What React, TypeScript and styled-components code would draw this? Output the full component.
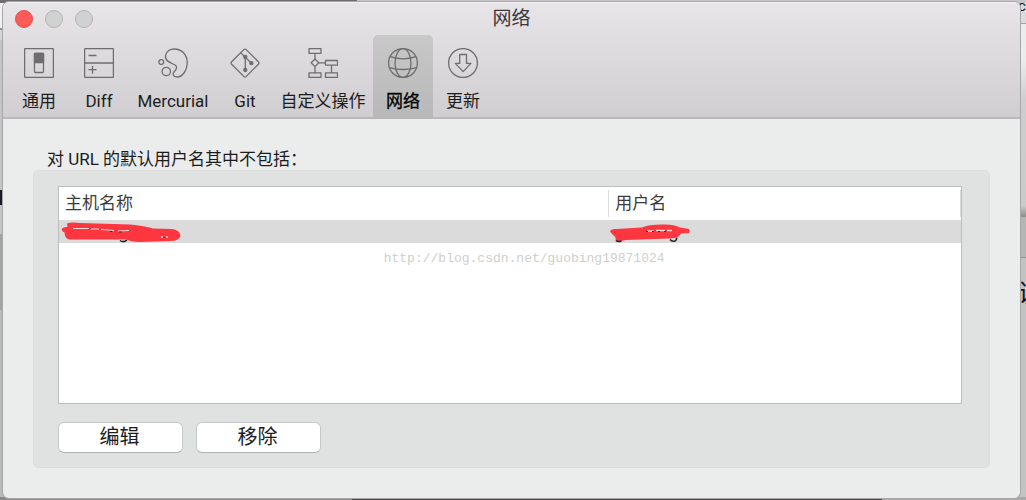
import React from 'react';
import styled, { createGlobalStyle } from 'styled-components';

const GlobalStyle = createGlobalStyle`
  * { box-sizing: border-box; }
  body {
    margin: 0;
    font-family: Roboto, "Noto Sans CJK SC", sans-serif;
    font-size: 17px;
    color: #1c1c1c;
  }
`;

const Desktop = styled.div`
  position: relative;
  display: flex;
  min-height: 100vh;
  padding: 2px 6px 2px 3px;
  overflow: hidden;
  background:
    linear-gradient(to right, #6e6c6e 0 357px, #c9c6c9 357px) 0 0 / 100% 3px no-repeat,
    linear-gradient(to right, #8a8a8a 0 352px, #4a4a4a 352px 882px, #a8a8a8 882px) 0 100% / 100% 3px no-repeat,
    linear-gradient(#f2f2f2 0 28px, #8c8e8c 28px 30px, #d4d4d4 30px 40px, #c4c4c4 40px 190px,
      #1c1a24 190px 205px, #c4c6c4 205px 234px, #a2a4a2 234px 310px, #b8bab8 310px) 0 0 / 8px 100% no-repeat,
    linear-gradient(#dcdadc 0 23px, #a4a2a4 23px 24px, #ececec 24px 60px, #cfcdcf 100px, #c9cbca 206px,
      #8f918f 216px 217px, #b4b6b5 217px 257px, #8f918f 257px 258px, #c2c4c3 258px) 100% 0 / 12px 100% no-repeat,
    #c2c4c3;
`;

const BackdropText = styled.span<{ $top: number; $size: number }>`
  position: absolute;
  top: ${(p) => p.$top}px;
  left: calc(100% - 8px);
  font-size: ${(p) => p.$size}px;
  line-height: 1;
  white-space: nowrap;
  color: #16141c;
`;

const Window = styled.main`
  position: relative;
  flex: 1;
  display: flex;
  flex-direction: column;
  border-radius: 6px;
  overflow: hidden;
  background: #ebedec;
  box-shadow: 0 0 0 1px #a6a8a7;
`;

const Header = styled.header`
  background: linear-gradient(#e8e5e8, #d0ced0);
  border-top: 1px solid #f2f0f2;
  border-bottom: 2px solid #b9b7b9;
`;

const TitleBar = styled.div`
  display: grid;
  grid-template-columns: 1fr auto 1fr;
  align-items: center;
  height: 32px;
  padding: 0 12px;
`;

const Lights = styled.div`
  display: flex;
  gap: 12px;
`;

const Light = styled.button<{ $close?: boolean }>`
  width: 18px;
  height: 18px;
  padding: 0;
  border-radius: 50%;
  background: ${(p) => (p.$close ? '#fc5b57' : '#cfd2d0')};
  border: 1px solid ${(p) => (p.$close ? '#e2504c' : '#b3b6b4')};
`;

const Title = styled.h1`
  margin: 0;
  font-size: 19px;
  line-height: 24px;
  font-weight: 400;
  color: #3a383a;
`;

const Toolbar = styled.nav`
  display: flex;
  padding-left: 6px;
`;

const Tool = styled.button<{ $width: number; $active?: boolean }>`
  display: flex;
  flex-direction: column;
  align-items: center;
  gap: 11px;
  width: ${(p) => p.$width}px;
  height: 82px;
  padding: 13px 0 0;
  border: 0;
  border-radius: 5px 5px 0 0;
  background: ${(p) => (p.$active ? 'linear-gradient(#c9c8c9, #b9b8b9)' : 'none')};
  font: inherit;
  line-height: 24px;
  white-space: nowrap;
  color: ${(p) => (p.$active ? '#000' : '#1c1c1c')};
  -webkit-text-stroke: ${(p) => (p.$active ? '0.3px #000' : '0')};
`;

const Icon = styled.svg`
  flex: none;
  width: 30px;
  height: 30px;
  fill: none;
  stroke: #6d6e6d;
  stroke-width: 1.3;
  stroke-linejoin: round;
`;

const Content = styled.section`
  flex: 1;
  display: flex;
  flex-direction: column;
  padding: 29px 30px 30px;
`;

const GroupLabel = styled.h2`
  margin: 0;
  padding-left: 14px;
  font-size: 17px;
  line-height: 22px;
  font-weight: 400;
`;

const Group = styled.div`
  flex: 1;
  display: flex;
  flex-direction: column;
  gap: 18px;
  padding: 15px 27px 14px 24px;
  border: 1px solid #dcdedd;
  border-radius: 5px;
  background: #e0e2e1;
`;

const TableFrame = styled.div`
  position: relative;
  flex: 1;
  min-height: 218px;
  border: 1px solid #bcbebd;
  background: #fff;
`;

const Table = styled.table`
  width: 100%;
  border-collapse: collapse;
  table-layout: fixed;
`;

const HeadCell = styled.th<{ $wide?: boolean }>`
  width: ${(p) => (p.$wide ? '607px' : '393px')};
  height: 33px;
  padding: 0 0 2px 6px;
  text-align: left;
  font-weight: 400;
  line-height: 24px;
  color: #3c3c3c;
  background: linear-gradient(#dcdcdc, #dcdcdc) 100% 3px / 1px 27px no-repeat;
`;

const Columns = styled.col<{ $share: number }>`
  width: ${(p) => p.$share}%;
`;

const Cell = styled.td`
  height: 23px;
  padding: 0 0 0 1px;
  background: #dadbda;
`;

const Scribble = styled.svg`
  display: block;
  overflow: visible;
  fill: #fd3640;
`;

const Watermark = styled.p`
  position: absolute;
  top: 62px;
  left: 36%;
  margin: 0;
  font-family: "Liberation Mono", monospace;
  font-size: 13px;
  line-height: 20px;
  color: #cfcfcb;
`;

const Actions = styled.div`
  display: flex;
  gap: 13px;
`;

const ActionButton = styled.button`
  width: 125px;
  height: 31px;
  padding: 0 2px 2px 0;
  border: 1px solid #c6c8c7;
  border-bottom-color: #b0b2b1;
  border-radius: 6px;
  background: #fff;
  font: inherit;
  font-size: 20px;
  line-height: 26px;
  color: #1c1c1c;
`;

const tools = [
  {
    label: '通用',
    width: 60,
    icon: (
      <>
        <rect x="0.6" y="0.6" width="28.8" height="28.8" rx="1" />
        <rect x="10.5" y="5.5" width="9" height="19" rx="1" />
        <rect x="10.5" y="5.5" width="9" height="9" fill="#6d6e6d" />
      </>
    ),
  },
  {
    label: 'Diff',
    width: 60,
    icon: (
      <>
        <rect x="0.6" y="0.6" width="28.8" height="28.8" rx="1" />
        <path d="M0.6 15H29.4M4.5 7.5H12.5M4.5 21.7H12.5M8.5 17.7V25.7" />
      </>
    ),
  },
  {
    label: 'Mercurial',
    width: 88,
    icon: (
      <>
        <circle cx="3.3" cy="14" r="2.4" />
        <circle cx="8.3" cy="23.5" r="4.2" />
        <path d="M7.6 7.4C8.4 3.2 12.3 1 16.4 1C23.6 1 29.2 6.8 29.2 14.2C29.2 22.6 24.4 29 19 29C15 29 14 25.4 16.4 23.4C19 21.2 19.4 18.2 16.8 16.8C13.6 15.2 6.4 13.4 7.6 7.4Z" />
      </>
    ),
  },
  {
    label: 'Git',
    width: 56,
    icon: (
      <>
        <path d="M13.8 1.6Q15 0.6 16.2 1.6L28.4 13.8Q29.4 15 28.4 16.2L16.2 28.4Q15 29.4 13.8 28.4L1.6 16.2Q0.6 15 1.6 13.8Z" />
        <path d="M10.6 4.6L21.4 15.2M15.3 9V22" />
        <g fill="#6d6e6d">
          <circle cx="15.3" cy="9" r="1.5" />
          <circle cx="15.3" cy="22" r="1.5" />
          <circle cx="21.4" cy="15.2" r="1.5" />
        </g>
      </>
    ),
  },
  {
    label: '自定义操作',
    width: 100,
    icon: (
      <>
        <rect x="1" y="0.7" width="12" height="4.6" />
        <rect x="17.5" y="12.5" width="12" height="4.6" />
        <rect x="1" y="24.8" width="12" height="4.6" />
        <rect x="17.5" y="24.8" width="12" height="4.6" />
        <path d="M7 5.3V11M7 18.6V24.8M10.8 14.8H17.5M23.5 17.1V24.8M7 11L10.8 14.8L7 18.6L3.2 14.8Z" />
      </>
    ),
  },
  {
    label: '网络',
    width: 60,
    active: true,
    icon: (
      <>
        <circle cx="15" cy="15" r="14.4" />
        <ellipse cx="15" cy="15" rx="8" ry="14.4" />
        <path d="M2.2 8.6Q15 13 27.8 8.6M1.5 19.6Q15 23.4 28.5 19.6" />
      </>
    ),
  },
  {
    label: '更新',
    width: 60,
    icon: (
      <>
        <circle cx="15" cy="15" r="14.4" />
        <path d="M11.7 6.5H18.5V15.4H22.9L15.1 23.6L7.3 15.4H11.7Z" />
      </>
    ),
  },
];

export default function App() {
  return (
    <Desktop>
      <GlobalStyle />
      <BackdropText aria-hidden="true" $top={-1} $size={15}>c</BackdropText>
      <BackdropText aria-hidden="true" $top={281} $size={25}>说</BackdropText>
      <Window>
        <Header>
          <TitleBar>
            <Lights>
              <Light $close aria-label="关闭" />
              <Light aria-label="最小化" />
              <Light aria-label="缩放" />
            </Lights>
            <Title>网络</Title>
          </TitleBar>
          <Toolbar>
            {tools.map((t) => (
              <Tool key={t.label} $width={t.width} $active={t.active}>
                <Icon viewBox="0 0 30 30" aria-hidden="true">{t.icon}</Icon>
                {t.label}
              </Tool>
            ))}
          </Toolbar>
        </Header>
        <Content>
          <GroupLabel id="hosts-label">对 URL 的默认用户名其中不包括：</GroupLabel>
          <Group>
            <TableFrame>
              <Table aria-labelledby="hosts-label">
                <colgroup>
                  <Columns $share={61} />
                  <Columns $share={39} />
                </colgroup>
                <thead>
                  <tr>
                    <HeadCell $wide>主机名称</HeadCell>
                    <HeadCell>用户名</HeadCell>
                  </tr>
                </thead>
                <tbody>
                  <tr>
                    <Cell>
                      <Scribble width="124" height="23" viewBox="60 220 124 23" aria-hidden="true">
                        <path d="M67 223.5Q71 222 80 223L130 224.5Q145 226 153 228.5L172 229Q180 230 180.5 236Q179 241 170 241L140 242Q132 242 126 239.5L70 239.5Q65 239.5 64.5 232.5Q61 231 62 228.5Q64 226.5 67.5 227Z" />
                        <path d="M120 240.5Q123.5 243 127 240" fill="none" stroke="#222" strokeWidth="1.5" />
                        <path d="M73 228.5H89M91 229H99M101 229.5L114 230.5M118 231L129 230.5" fill="none" stroke="#f3dada" strokeWidth="1" />
                        <path d="M110 231.5H112M119 232H122M164 237V238" fill="none" stroke="#333" strokeWidth="1" />
                        <path d="M161 237H163M166 237H168" fill="none" stroke="#f3dada" strokeWidth="1.5" />
                      </Scribble>
                    </Cell>
                    <Cell>
                      <Scribble width="84" height="23" viewBox="608 220 84 23" aria-hidden="true">
                        <path d="M608 231.5Q609 228.5 614 229L640 227.5Q646 224.5 660 224.5Q672 224 678 227.5L687 229Q688.5 231 687 233L679 233.5Q677 238 668 238.5L624 240Q617 242 613.5 240.5Q614.5 237 611 235Z" />
                        <path d="M614 240.5Q616 242.5 619.5 240.8M668 239.5Q670 242 673 241Q675 240 674.5 237.5" fill="none" stroke="#222" strokeWidth="1.5" />
                        <path d="M645 231H652M654 230.5H663M665 230.5H670" fill="none" stroke="#f3dada" strokeWidth="1.5" />
                        <path d="M644 231.5H646M650 231.5H652M656 231.5H658M662 231.5H664" fill="none" stroke="#333" strokeWidth="1" />
                      </Scribble>
                    </Cell>
                  </tr>
                </tbody>
              </Table>
              <Watermark>http://blog.csdn.net/guobing19871024</Watermark>
            </TableFrame>
            <Actions>
              <ActionButton>编辑</ActionButton>
              <ActionButton>移除</ActionButton>
            </Actions>
          </Group>
        </Content>
      </Window>
    </Desktop>
  );
}
